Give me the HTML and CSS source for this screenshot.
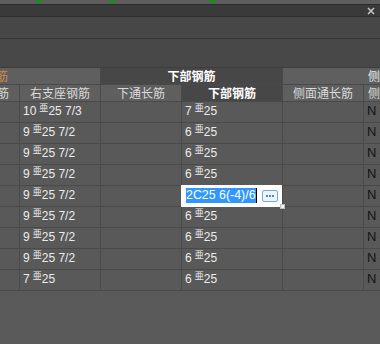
FILE: index.html
```html
<!DOCTYPE html>
<html>
<head>
<meta charset="utf-8">
<link rel="stylesheet" href="styles.css">
</head>
<body>
<div class="topbar">
  <span class="dot d1"></span><span class="dot d2"></span><span class="dot d3"></span>
</div>
<div class="titlebar">
  <svg class="close" width="8" height="8" viewBox="0 0 8 8"><path d="M1 1 L7 7 M7 1 L1 7" stroke="#c4c4c4" stroke-width="1.6"/></svg>
</div>
<div class="toolbar"></div>
<div class="panel"></div>
<div class="tablewrap">
  <div class="grid">
    <div class="g g-left">筋</div>
    <div class="g g-mid">下部钢筋</div>
    <div class="g g-right">侧</div>

    <div class="h">左支座钢筋</div>
    <div class="h">右支座钢筋</div>
    <div class="h">下通长筋</div>
    <div class="h h-sel">下部钢筋</div>
    <div class="h">侧面通长筋</div>
    <div class="h h-last">侧面纵筋</div>

    <div class="c"></div><div class="c">10<span class="rb">亜</span>25 7/3</div><div class="c"></div><div class="c">7<span class="rb">亜</span>25</div><div class="c"></div><div class="c n">N<span class="rb">亜</span>12</div>
    <div class="c"></div><div class="c">9<span class="rb">亜</span>25 7/2</div><div class="c"></div><div class="c">6<span class="rb">亜</span>25</div><div class="c"></div><div class="c n">N<span class="rb">亜</span>12</div>
    <div class="c"></div><div class="c">9<span class="rb">亜</span>25 7/2</div><div class="c"></div><div class="c">6<span class="rb">亜</span>25</div><div class="c"></div><div class="c n">N<span class="rb">亜</span>12</div>
    <div class="c"></div><div class="c">9<span class="rb">亜</span>25 7/2</div><div class="c"></div><div class="c">6<span class="rb">亜</span>25</div><div class="c"></div><div class="c n">N<span class="rb">亜</span>12</div>
    <div class="c"></div><div class="c">9<span class="rb">亜</span>25 7/2</div><div class="c"></div>
    <div class="c editing">
      <div class="editor">
        <span class="selected">2C25 6(-4)/6</span><span class="caret"></span>
        <span class="more"><i></i><i></i><i></i></span>
        <span class="handle"></span>
      </div>
    </div>
    <div class="c"></div><div class="c n">N<span class="rb">亜</span>12</div>
    <div class="c"></div><div class="c">9<span class="rb">亜</span>25 7/2</div><div class="c"></div><div class="c">6<span class="rb">亜</span>25</div><div class="c"></div><div class="c n">N<span class="rb">亜</span>12</div>
    <div class="c"></div><div class="c">9<span class="rb">亜</span>25 7/2</div><div class="c"></div><div class="c">6<span class="rb">亜</span>25</div><div class="c"></div><div class="c n">N<span class="rb">亜</span>12</div>
    <div class="c"></div><div class="c">9<span class="rb">亜</span>25 7/2</div><div class="c"></div><div class="c">6<span class="rb">亜</span>25</div><div class="c"></div><div class="c n">N<span class="rb">亜</span>12</div>
    <div class="c"></div><div class="c">7<span class="rb">亜</span>25</div><div class="c"></div><div class="c">6<span class="rb">亜</span>25</div><div class="c"></div><div class="c n">N<span class="rb">亜</span>12</div>
  </div>
</div>
</body>
</html>
```
FILE: styles.css
```css
html, body {
  margin: 0;
  padding: 0;
}
body {
  width: 380px;
  height: 344px;
  overflow: hidden;
  background: #5a5a5a;
  font-family: "Liberation Sans", "Noto Sans CJK SC", sans-serif;
  font-size: 12px;
  color: #e6e6e6;
}
.topbar {
  height: 4px;
  background: #5e5e5e;
  border-bottom: 1px solid #2c2c2c;
  display: flex;
}
.dot {
  width: 6px;
  height: 3px;
  background: #1f8a1f;
  border-radius: 0 0 2px 2px;
}
.d1 { margin-left: 36px; }
.d2 { margin-left: 67px; }
.d3 { margin-left: 94px; }
.titlebar {
  height: 11px;
  background: #3a3a3a;
  border-bottom: 1px solid #2e2e2e;
  display: flex;
  justify-content: flex-end;
  align-items: center;
  padding-right: 5px;
}
.close {
  display: block;
  margin-top: 1px;
}
.toolbar {
  height: 21px;
  background: #474747;
  border-bottom: 1px solid #353535;
}
.panel {
  height: 28px;
  background: #484848;
}
.tablewrap {
  width: 380px;
  overflow: hidden;
}
.grid {
  display: grid;
  grid-template-columns: 80px 80px 80px 100px 80px 80px;
  gap: 1px;
  background: #4a4a4a;
  border-top: 1px solid #3e3e3e;
  border-bottom: 1px solid #4a4a4a;
  margin-left: -61px;
  width: max-content;
  font-family: "Noto Sans CJK SC", "Liberation Sans", sans-serif;
}
.g {
  height: 16px;
  line-height: 16px;
  background: #5f5f5f;
  white-space: nowrap;
  overflow: hidden;
}
.g-left {
  grid-column: 1 / 3;
  text-align: right;
  padding-right: 92px;
  color: #d08848;
}
.g-mid {
  grid-column: 3 / 5;
  background: #474747;
  text-align: center;
  color: #ffffff;
  font-weight: bold;
}
.g-right {
  grid-column: 5 / 7;
  padding-left: 85px;
  color: #e4ecf4;
}
.h {
  height: 16px;
  line-height: 16px;
  background: #5f5f5f;
  text-align: center;
  color: #dadada;
  white-space: nowrap;
  overflow: hidden;
}
.h-sel {
  background: #474747;
  color: #ffffff;
  font-weight: bold;
}
.h-last {
  text-align: left;
  padding-left: 4px;
}
.c {
  height: 20px;
  line-height: 18px;
  background: #595959;
  padding-left: 3px;
  font-family: "Liberation Sans", "Noto Sans CJK SC", sans-serif;
  color: #ececec;
  white-space: nowrap;
  overflow: hidden;
}
.rb {
  font-family: "Noto Sans CJK JP", sans-serif;
  font-size: 9px;
  display: inline-block;
  margin: 0 0 0 3px;
  vertical-align: 4px;
  line-height: 9px;
}
.n {
  color: #141414;
  padding-left: 3px;
  font-size: 13px;
}
.editing {
  position: relative;
  overflow: visible;
  padding-left: 0;
}
.editor {
  position: absolute;
  left: -1px;
  top: -1px;
  right: 0;
  bottom: -1px;
  background: #ffffff;
  display: flex;
  align-items: flex-start;
  padding: 3px 0 0 5px;
  box-sizing: border-box;
  z-index: 2;
}
.selected {
  background: #3297fd;
  color: #ffffff;
  height: 15px;
  line-height: 15px;
  font-size: 12.4px;
  font-family: "Liberation Sans", sans-serif;
}
.caret {
  width: 1px;
  height: 15px;
  background: #000000;
}
.more {
  width: 14px;
  height: 10px;
  margin: 2px 0 0 5px;
  border: 1px solid #76a8da;
  border-radius: 2px;
  background: #eef4fc;
  display: flex;
  justify-content: center;
  align-items: center;
  gap: 1px;
}
.more i {
  width: 2px;
  height: 2px;
  background: #4a88cc;
}
.handle {
  position: absolute;
  left: 99px;
  top: 19px;
  width: 5px;
  height: 5px;
  background: #eeeeee;
  border: 1px solid #bdbdbd;
  box-sizing: border-box;
}
```
